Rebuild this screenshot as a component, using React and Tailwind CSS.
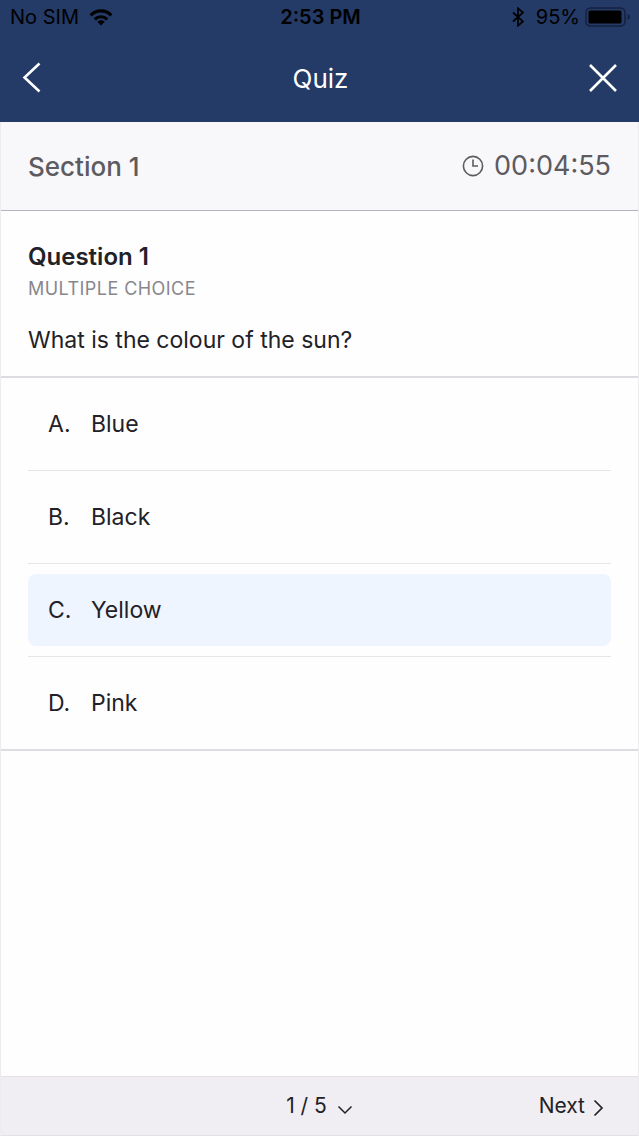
import { useState } from "react";

const OPTIONS = [
  { letter: "A", text: "Blue" },
  { letter: "B", text: "Black" },
  { letter: "C", text: "Yellow" },
  { letter: "D", text: "Pink" },
];

// ── Icons ─────────────────────────────────────────────────
function WifiIcon() {
  return (
    <svg width="24" height="17" viewBox="0 0 26 18" fill="none" stroke="currentColor" strokeWidth="3.4" aria-hidden="true">
      <path d="M1.8 6.6C8 .2 18 .2 24.2 6.6" />
      <path d="M6.2 11c3.8-3.8 9.8-3.8 13.6 0" />
      <path d="M13 17.6l-4-4c2.2-2.2 5.8-2.2 8 0z" fill="currentColor" stroke="none" />
    </svg>
  );
}

function BluetoothIcon() {
  return (
    <svg width="12" height="20" viewBox="0 0 12 20" fill="none" stroke="currentColor" strokeWidth="1.7" aria-hidden="true">
      <path d="M1 5.5l10 9-5 4.2V1.3l5 4.2-10 9" />
    </svg>
  );
}

function BatteryIcon() {
  return (
    <svg width="46" height="20" viewBox="0 0 46 20" aria-hidden="true">
      <rect x="1" y="1" width="39" height="18" rx="4.5" fill="none" stroke="#14213f" strokeWidth="1.5" />
      <rect x="3.5" y="3.5" width="33" height="13" rx="1.5" fill="#000" />
      <path d="M42.5 7v6c1.6-.6 2.4-1.6 2.4-3s-.8-2.4-2.4-3z" fill="#14213f" />
    </svg>
  );
}

function ClockIcon() {
  return (
    <svg width="22" height="22" viewBox="0 0 22 22" fill="none" stroke="currentColor" strokeWidth="1.6" aria-hidden="true">
      <circle cx="11" cy="11" r="9.6" />
      <path d="M11 4.5V11h5" />
    </svg>
  );
}

// ── Header ────────────────────────────────────────────────
function Header() {
  return (
    <header className="bg-[#243a67]">
      <div className="grid grid-cols-3 items-center h-[34px] pl-[10px] pr-2 text-xl text-black">
        <div className="flex items-center gap-[10px]">
          <span>No SIM</span>
          <WifiIcon />
        </div>
        <span className="text-center font-semibold">2:53 PM</span>
        <div className="flex items-center justify-end">
          <BluetoothIcon />
          <span className="ml-3 mr-[5px]">95%</span>
          <BatteryIcon />
        </div>
      </div>
      <div className="flex items-center justify-between h-[88px] pl-[22px] pr-5 text-white">
        <button type="button" aria-label="Back" className="w-8 cursor-pointer">
          <svg width="20" height="32" viewBox="0 0 20 32" fill="none" stroke="currentColor" strokeWidth="2.6">
            <path d="M17.5 1.5L2.5 15.500 17.5 29.500" />
          </svg>
        </button>
        <h1 className="text-[26px]">Quiz</h1>
        <button type="button" aria-label="Close" className="w-8 cursor-pointer">
          <svg width="32" height="32" viewBox="0 0 32 32" fill="none" stroke="currentColor" strokeWidth="2.6">
            <path d="M3 3l26 26M29 3L3 29" />
          </svg>
        </button>
      </div>
    </header>
  );
}

// ── Question + answers ────────────────────────────────────
function Question() {
  const [answer, setAnswer] = useState("C");

  return (
    <fieldset className="border-b-2 border-[#dddce1]">
      <legend className="block w-full px-[27px] pt-7 pb-5 border-b-2 border-[#dddce1]">
        <span className="block text-2xl leading-9 font-semibold">Question 1</span>
        <span className="block text-lg leading-7 text-[#88878c] tracking-wide">MULTIPLE CHOICE</span>
        <span className="block mt-[21px] text-[23px] leading-8">What is the colour of the sun?</span>
      </legend>
      <div className="px-[27px]">
        {OPTIONS.map((option) => (
          <div key={option.letter} className="py-[10px] border-b border-[#e6e5e9] last:border-b-0">
            <label className="relative flex items-center h-[72px] px-5 rounded-lg text-[23px] cursor-pointer has-[:checked]:bg-[#eff5fe]">
              <input
                type="radio"
                name="answer"
                value={option.letter}
                checked={answer === option.letter}
                onChange={() => setAnswer(option.letter)}
                className="sr-only"
              />
              <span className="w-[43px]">{option.letter}.</span>
              <span>{option.text}</span>
            </label>
          </div>
        ))}
      </div>
    </fieldset>
  );
}

// ── Footer ────────────────────────────────────────────────
function Footer() {
  return (
    <footer className="grid grid-cols-3 items-center h-[60px] px-[34px] bg-[#f0eef2] border-y border-[#e3e1e6] text-[21px]">
      <button type="button" className="col-start-2 flex items-center justify-center gap-[10px] cursor-pointer">
        1 / 5
        <svg width="16" height="10" viewBox="0 0 16 10" className="mt-2" fill="none" stroke="currentColor" strokeWidth="1.5" aria-hidden="true">
          <path d="M1.5 1.5L8 8l6.5-6.5" />
        </svg>
      </button>
      <button type="button" className="flex items-center justify-end gap-2 cursor-pointer">
        Next
        <svg width="11" height="18" viewBox="0 0 11 18" className="mt-1" fill="none" stroke="currentColor" strokeWidth="1.7" aria-hidden="true">
          <path d="M1.5 1.5L9 9l-7.5 7.5" />
        </svg>
      </button>
    </footer>
  );
}

export default function App() {
  return (
    <div className="flex flex-col min-h-screen bg-[#fefefe] text-[#222127] font-['Inter',sans-serif]">
      <Header />
      <div className="flex flex-col flex-1 border-x border-[#ececef]">
        <div className="flex items-center justify-between h-[89px] px-[27px] bg-[#f8f7fa] border-b border-[#b5b4b8] text-[#5c5b5f]">
          <h2 className="text-[26px] font-medium">Section 1</h2>
          <div className="flex items-center gap-[10px] text-[27px]">
            <ClockIcon />
            <time>00:04:55</time>
          </div>
        </div>
        <main className="flex-1">
          <Question />
        </main>
        <Footer />
      </div>
    </div>
  );
}
